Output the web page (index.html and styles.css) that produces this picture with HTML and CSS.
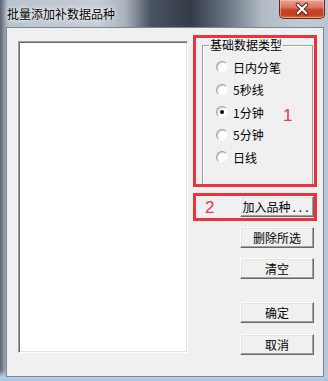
FILE: index.html
```html
<!DOCTYPE html>
<html lang="zh-CN">
<head>
    <meta charset="UTF-8">
    <title>批量添加补数据品种</title>
    <link rel="stylesheet" href="styles.css">
</head>
<body>
    <div class="window">
        <div class="titlebar">
            <span class="title">批量添加补数据品种</span>
            <button class="close-btn" title="关闭">
                <svg width="46" height="19" viewBox="0 0 46 19">
                    <path d="M18.5 4.5 L27.5 13.5 M27.5 4.5 L18.5 13.5" stroke="#5a1b12" stroke-width="4.2" stroke-linecap="round"/>
                    <path d="M18.5 4.5 L27.5 13.5 M27.5 4.5 L18.5 13.5" stroke="#ffffff" stroke-width="2.3" stroke-linecap="round"/>
                </svg>
            </button>
        </div>

        <div class="client">
            <div class="list-box"></div>

            <div class="side">
                <fieldset class="group">
                    <legend>基础数据类型</legend>
                    <label class="radio"><span class="radio-dot"></span>日内分笔</label>
                    <label class="radio"><span class="radio-dot"></span>5秒线</label>
                    <label class="radio"><span class="radio-dot checked"></span>1分钟</label>
                    <label class="radio"><span class="radio-dot"></span>5分钟</label>
                    <label class="radio"><span class="radio-dot"></span>日线</label>
                </fieldset>

                <button class="btn btn-add">加入品种<span class="dots">...</span></button>
                <button class="btn">删除所选</button>
                <button class="btn">清空</button>
                <button class="btn btn-ok">确定</button>
                <button class="btn btn-cancel">取消</button>
            </div>

            <!-- annotation boxes drawn over the dialog -->
            <div class="mark mark-1"><span class="mark-num">1</span></div>
            <div class="mark mark-2"><span class="mark-num">2</span></div>
        </div>
    </div>
</body>
</html>
```

FILE: styles.css
```css
* {
    box-sizing: border-box;
}

body {
    margin: 0;
    font-family: "Noto Sans CJK SC", sans-serif;
    font-size: 12px;
    color: #000;
    background: #fff;
}

.window {
    width: 328px;
    height: 381px;
    display: flex;
    flex-direction: column;
    background:
        linear-gradient(to bottom, rgba(170, 200, 230, 0) 0, rgba(170, 200, 230, 0) 370px, #b3cfe9 377px, #a6c4e2 381px),
        linear-gradient(to right, #59636f 0, #8a95a1 4px, #b9c3cd 8px, #c4ccd5 30%, #aab3bd 38%, #4a5460 46%, #333c47 58%, #6e7985 70%, #b3bcc6 80%, #c2cbd4 92%, #b9c6d3 100%);
}

.titlebar {
    height: 27px;
    display: flex;
    align-items: flex-start;
    justify-content: space-between;
    padding-left: 7px;
}

.title {
    line-height: 27px;
    font-size: 12px;
    text-shadow: 0 0 6px #fff, 0 0 3px #fff;
}

.close-btn {
    width: 46px;
    height: 19px;
    margin-right: 3px;
    padding: 0;
    border: 1px solid #6b2418;
    border-top: none;
    border-radius: 0 0 5px 5px;
    background: linear-gradient(to bottom, #e8a394 0, #dc7563 40%, #c6412a 55%, #c0451f 85%, #d77a4c 100%);
    box-shadow: inset 0 0 0 1px rgba(255, 220, 210, 0.45);
    display: flex;
}

.client {
    position: relative;
    flex: 1;
    margin: 0 4px 4px 6px;
    border: 1px solid #77889a;
    background: #f0f0f0;
    display: flex;
    align-items: flex-start;
    padding: 10px 9px 0 11px;
}

.list-box {
    width: 170px;
    height: 312px;
    margin-top: 3px;
    background: #fff;
    border: 1px solid;
    border-color: #a0a0a0 #ffffff #ffffff #a0a0a0;
    box-shadow: inset 1px 1px 0 #696969, inset -1px -1px 0 #e3e3e3;
}

.side {
    width: 112px;
    margin-left: 14px;
    display: flex;
    flex-direction: column;
    align-items: flex-end;
}

.group {
    width: 111px;
    height: 147px;
    align-self: flex-start;
    margin: 0;
    padding: 4px 0 0 6px;
    border: 1px solid #a0a0a0;
    box-shadow: inset 1px 1px 0 #fff;
}

.group legend {
    padding: 0 1px;
    line-height: 14px;
    background: #f0f0f0;
}

.radio {
    height: 22.5px;
    margin-left: 7px;
    display: flex;
    align-items: center;
}

.radio-dot {
    width: 12px;
    height: 12px;
    margin-right: 5px;
    border-radius: 50%;
    background: #fff;
    border: 1px solid;
    border-color: #a0a0a0 #f4f4f4 #f4f4f4 #a0a0a0;
    box-shadow: inset 1px 1px 0 #d0d0d0;
    display: flex;
    align-items: center;
    justify-content: center;
}

.radio-dot.checked::after {
    content: "";
    width: 4px;
    height: 4px;
    border-radius: 50%;
    background: #000;
}

.btn {
    width: 74px;
    height: 21px;
    margin-top: 10px;
    padding: 0;
    font-family: inherit;
    font-size: 12px;
    color: #000;
    background: #f0f0f0;
    border: 1px solid;
    border-color: #ffffff #696969 #696969 #ffffff;
    box-shadow: inset -1px -1px 0 #a0a0a0, inset 1px 1px 0 #e3e3e3;
}

.btn-add {
    margin-top: 11px;
}

.btn .dots {
    letter-spacing: 3px;
    margin-left: 2px;
}

.btn-ok {
    margin-top: 23px;
}

.btn-cancel {
    margin-top: 11px;
}

.mark {
    position: absolute;
    left: 186px;
    width: 124px;
    border: 3px solid #e8343c;
}

.mark-1 {
    top: 7px;
    height: 152px;
}

.mark-2 {
    top: 165px;
    height: 28px;
    display: flex;
    align-items: center;
    padding-left: 9px;
}

.mark-num {
    font-family: "Liberation Sans", sans-serif;
    font-size: 17px;
    line-height: 1;
    color: #e8384a;
}

.mark-1 .mark-num {
    position: absolute;
    left: 87px;
    top: 69px;
}
```
